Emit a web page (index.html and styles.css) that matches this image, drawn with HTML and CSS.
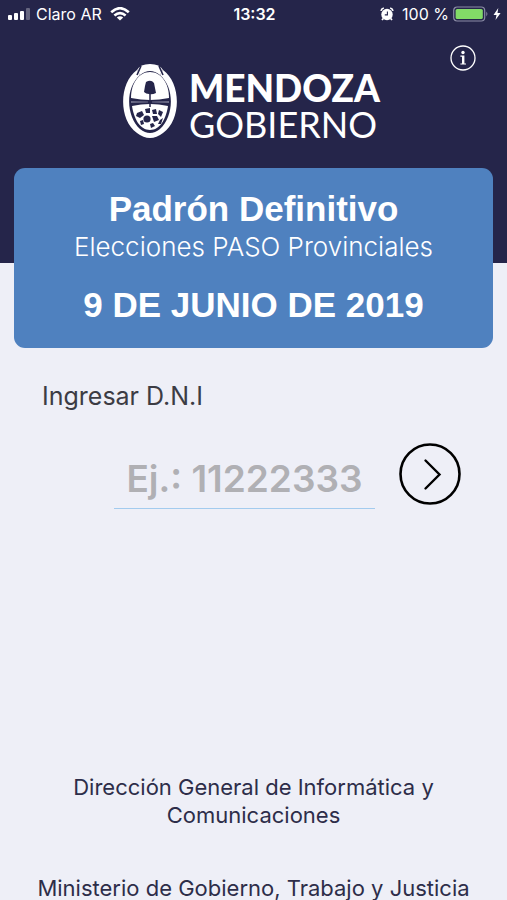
FILE: index.html
```html
<!DOCTYPE html>
<html lang="es">
<head>
<meta charset="utf-8">
<meta name="viewport" content="width=device-width, initial-scale=1">
<title>Padrón Definitivo</title>
<link rel="stylesheet" href="styles.css">
</head>
<body>
<div class="page">
  <header class="header">
    <div class="status">
      <div class="status-side">
        <svg width="24" height="12" viewBox="0 0 24 12" fill="#fff" aria-hidden="true">
          <rect x="0" y="7" width="4" height="5" rx="1"/>
          <rect x="6" y="5" width="4" height="7" rx="1"/>
          <rect x="12" y="3" width="4" height="9" rx="1"/>
          <rect x="18" y="0" width="4" height="12" rx="1" opacity=".3"/>
        </svg>
        <span class="carrier">Claro AR</span>
        <svg width="20" height="14" viewBox="0 0 20 14" fill="none" stroke="#fff" stroke-width="2.6" aria-hidden="true">
          <path d="M1.2 5.2Q10-2.8 18.8 5.2"/>
          <path d="M4.4 8.5Q10 3.6 15.6 8.5"/>
          <path d="M10 13.6L6.8 10.6Q10 8 13.2 10.6Z" fill="#fff" stroke="none"/>
        </svg>
      </div>
      <time class="clock">13:32</time>
      <div class="status-side status-end">
        <svg class="alarm" width="14" height="14" viewBox="0 0 14 14" aria-hidden="true">
          <circle cx="7" cy="7.5" r="5.7" fill="#fff"/>
          <path d="M1 3.8Q1.4 1.6 3.8 1M13 3.8Q12.6 1.6 10.2 1M3.2 11.6L2 13M10.8 11.6L12 13" fill="none" stroke="#fff" stroke-width="1.7"/>
          <path d="M7.4 4.4V7.9H4.8" fill="none" stroke="#25254a" stroke-width="1.1"/>
        </svg>
        <span>100 %</span>
        <svg width="36" height="16" viewBox="0 0 36 16" aria-hidden="true">
          <rect x=".7" y="1" width="31" height="14" rx="3.5" fill="none" stroke="#8b8ca6" stroke-width="1.2"/>
          <rect x="2.6" y="3" width="27.2" height="10" rx="1.6" fill="#82db67"/>
          <path d="M33.3 5.6Q35.6 8 33.3 10.4Z" fill="#8b8ca6"/>
        </svg>
        <svg width="8" height="14" viewBox="0 0 8 14" fill="#fff" aria-hidden="true"><path d="M5.3 1L.5 8H3.5L2.5 13L7.6 6H4.5Z"/></svg>
      </div>
    </div>
    <div class="masthead">
      <div class="brand">
        <svg class="crest" width="54" height="76" viewBox="0 0 54 76" aria-hidden="true">
          <path d="M14 7Q17 1 27 1T40 7L37 12Q27 4 17 12Z" fill="#fff"/>
          <path d="M14 7C-4 20-5 56 14 70Q27 80 40 70C59 56 58 20 40 7L37 12C52 25 51 53 37 66Q27 74 17 66C3 53 2 25 17 12Z" fill="#fff"/>
          <path d="M18 3L14 12M36 3L40 12" stroke="#25254a" stroke-width="1.6"/>
          <path d="M8 35C8 20 16 9 27 9S46 20 46 35Q36 37 27 37T8 35Z" fill="#fff"/>
          <path d="M8 38L25 38.5V39.5L8 40ZM46 38L29 38.5V39.5L46 40Z" fill="#6d6d89"/>
          <path d="M9 43Q27 39 45 43C43 56 37 67 27 67S11 56 9 43Z" fill="#fff"/>
          <path d="M27 20V44" stroke="#25254a" stroke-width="1.5"/>
          <path d="M22 23L23 19Q28 16 31 20L33 30Q29 32 26 31Q23 31 21 29Z" fill="#25254a"/>
          <g fill="#25254a">
            <path d="M14 50L19 48L21 52L17 55L13 53Z"/>
            <path d="M22 46L27 45L27 50L23 50Z"/>
            <path d="M29 47L33 46L34 51L30 51Z"/>
            <path d="M36 47L40 49L38 54L35 51Z"/>
            <circle cx="24" cy="56" r="3.6"/>
            <path d="M29 53L34 53L36 57L31 59Z"/>
            <path d="M17 58L20 57L21 61L18 62Z"/>
            <path d="M27 61L30 60L32 63L28 65Z"/>
            <path d="M37 57L40 55L38 61L35 61Z"/>
          </g>
        </svg>
        <div class="wordmark">
          <span class="brand-name">MENDOZA</span>
          <span class="brand-sub">GOBIERNO</span>
        </div>
      </div>
      <button class="info" type="button" aria-label="Información">
        <svg width="26" height="26" viewBox="0 0 26 26" aria-hidden="true">
          <circle cx="13" cy="13" r="12" fill="none" stroke="#fff" stroke-width="1.3"/>
          <circle cx="13" cy="7.5" r="1.7" fill="#fff"/>
          <path d="M10.4 10.5H14.4V18.4H16V19.6H10.4V18.4H12V11.7H10.4Z" fill="#fff"/>
        </svg>
      </button>
    </div>
  </header>
  <main class="main">
    <section class="card">
      <h1 class="card-title">Padrón Definitivo</h1>
      <p class="card-sub">Elecciones PASO Provinciales</p>
      <p class="card-date">9 DE JUNIO DE 2019</p>
    </section>
    <form class="search">
      <label class="label" for="dni">Ingresar D.N.I</label>
      <div class="row">
        <input class="field" id="dni" type="text" inputmode="numeric" placeholder="Ej.: 11222333">
        <button class="go" type="submit" aria-label="Buscar">
          <svg width="62" height="62" viewBox="0 0 62 62" fill="none" stroke="#000" aria-hidden="true">
            <circle cx="31" cy="31" r="29.5" stroke-width="2.6"/>
            <path d="M26.5 17.5L40.5 31.5L26.5 45.5" stroke-width="2.4" stroke-linecap="round"/>
          </svg>
        </button>
      </div>
    </form>
  </main>
  <footer class="footer">
    <p>Dirección General de Informática y Comunicaciones</p>
    <p class="ministry">Ministerio de Gobierno, Trabajo y Justicia</p>
  </footer>
</div>
</body>
</html>
```

FILE: styles.css
```css
* {
  box-sizing: border-box;
}

body,
h1,
p {
  margin: 0;
}

body {
  background: #eeeff7;
  color: #2d2d49;
  font-family: Inter, "Liberation Sans", sans-serif;
}

button {
  padding: 0;
  border: 0;
  background: none;
  cursor: pointer;
}

svg {
  display: block;
  flex: none;
}

.page {
  display: flex;
  flex-direction: column;
  min-height: 100vh;
}

.header {
  padding-bottom: 121px;
  background: #25254a;
  color: #fff;
}

.status {
  display: grid;
  grid-template-columns: 1fr auto 1fr;
  align-items: center;
  height: 28px;
  padding: 0 6px 0 8px;
  font-size: 16px;
}

.status-side {
  display: flex;
  align-items: center;
  gap: 4px;
}

.status-end {
  justify-content: flex-end;
}

.carrier,
.alarm {
  margin-right: 4px;
}

.clock {
  font-weight: 600;
}

.masthead {
  display: grid;
  grid-template-columns: 1fr auto 1fr;
  align-items: start;
  padding: 16px 31px 0 27px;
}

.brand {
  grid-column: 2;
  display: flex;
  align-items: flex-start;
  gap: 12px;
  margin-top: 19px;
}

.info {
  justify-self: end;
  margin-top: 1px;
}

.wordmark {
  display: flex;
  flex-direction: column;
  padding-top: 7px;
  font-family: Lato, sans-serif;
}

.brand-name {
  font-size: 37px;
  font-weight: 900;
  line-height: 36px;
}

.brand-sub {
  font-size: 36px;
  line-height: 36px;
}

.card {
  margin: -95px 14px 0;
  padding: 21px 16px 23px;
  border-radius: 11px;
  background: #4f81bf;
  color: #fff;
  text-align: center;
}

.card-title,
.card-date {
  font-family: "Liberation Sans", Arial, sans-serif;
  font-size: 35px;
  font-weight: 700;
  line-height: 40px;
}

.card-sub {
  font-size: 26px;
  font-weight: 300;
  line-height: 36px;
}

.card-date {
  margin-top: 20px;
}

.search {
  padding: 32px 46px 0 42px;
}

.label {
  display: block;
  color: #3c3c44;
  font-size: 25px;
  line-height: 32px;
}

.row {
  display: flex;
  align-items: center;
  gap: 24px;
  margin-top: 27px;
  padding-left: 72px;
}

.field {
  flex: 1;
  min-width: 0;
  height: 70px;
  padding: 10px 0 0;
  border: 0;
  border-bottom: 1px solid #a3cbee;
  background: none;
  color: #3c3c44;
  font-family: inherit;
  font-size: 37px;
  font-weight: 600;
  text-align: center;
}

.field::placeholder {
  color: #b0b0b4;
  opacity: 1;
}

.footer {
  display: flex;
  flex-direction: column;
  gap: 47px;
  margin-top: auto;
  padding: 0 32px;
  font-size: 22px;
  line-height: 28px;
  text-align: center;
}

.ministry {
  line-height: 24px;
}
```
